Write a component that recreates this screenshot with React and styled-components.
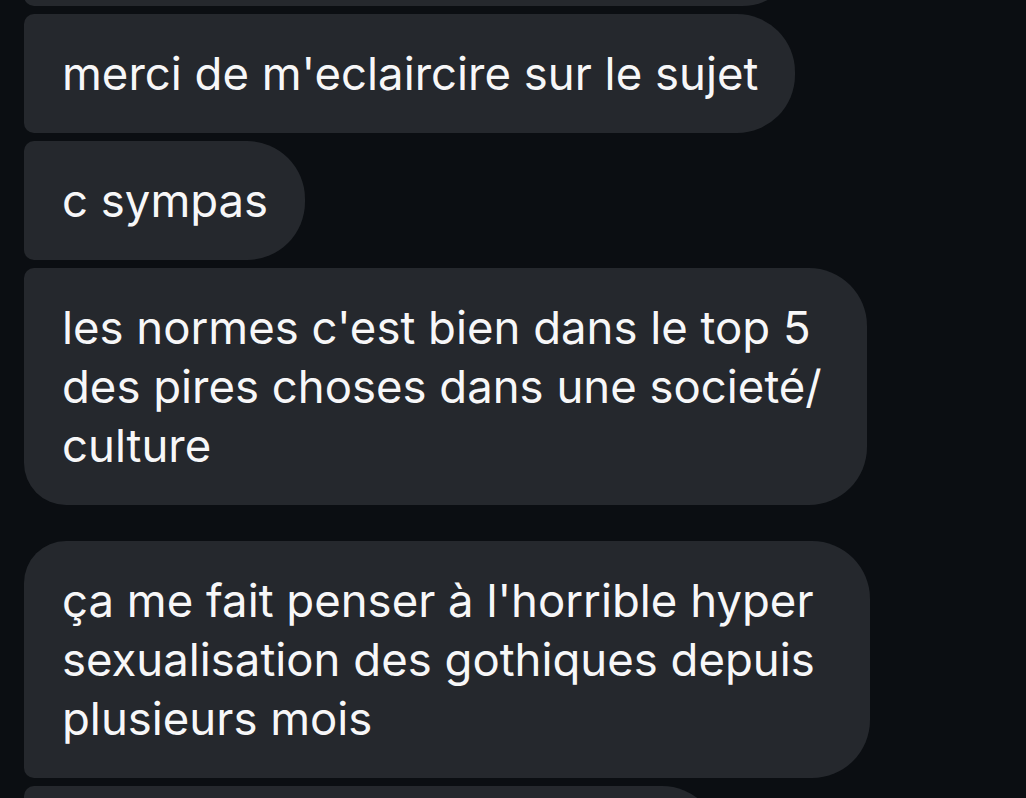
import React from 'react';
import styled, { createGlobalStyle } from 'styled-components';

const GlobalStyle = createGlobalStyle`
  html, body {
    margin: 0;
    padding: 0;
    background: #0b0e12;
    overflow: hidden;
  }
`;

const Screen = styled.div`
  width: 1026px;
  height: 798px;
  overflow: hidden;
  background: #0b0e12;
  font-family: Inter, "Noto Sans", sans-serif;
`;

const Thread = styled.div`
  display: flex;
  flex-direction: column;
  align-items: flex-start;
  gap: 8px;
  padding-left: 24px;
  margin-top: -113px;
`;

const Group = styled.div`
  display: flex;
  flex-direction: column;
  align-items: flex-start;
  gap: 8px;
  margin-top: ${(p) => (p.$spaced ? '28px' : '0')};
`;

const Bubble = styled.div`
  box-sizing: border-box;
  width: ${(p) => (p.$width ? `${p.$width}px` : 'auto')};
  height: ${(p) => (p.$height ? `${p.$height}px` : 'auto')};
  padding: 30px 37px 30px 38px;
  background: #25282d;
  color: #f7f7f8;
  font-size: 45.5px;
  line-height: 59px;
  border-radius: ${(p) => p.$tl || 10}px 58px 58px ${(p) => p.$bl || 10}px;
`;

const Line = styled.div`
  white-space: nowrap;
`;

const first = [
  { lines: [], width: 776, height: 119 },
  { lines: ["merci de m'eclaircire sur le sujet"] },
  { lines: ['c sympas'] },
  {
    lines: ["les normes c'est bien dans le top 5", 'des pires choses dans une societé/', 'culture'],
    width: 843,
    bl: 42,
  },
];

const second = [
  {
    lines: ["ça me fait penser à l'horrible hyper", 'sexualisation des gothiques depuis', 'plusieurs mois'],
    width: 846,
    tl: 42,
  },
  { lines: [], width: 696, height: 119 },
];

function Message({ lines, width, height, tl, bl }) {
  return (
    <Bubble $width={width} $height={height} $tl={tl} $bl={bl}>
      {lines.map((l, i) => (
        <Line key={i}>{l}</Line>
      ))}
    </Bubble>
  );
}

export default function App() {
  return (
    <Screen>
      <GlobalStyle />
      <Thread>
        <Group>
          {first.map((m, i) => (
            <Message key={i} {...m} />
          ))}
        </Group>
        <Group $spaced>
          {second.map((m, i) => (
            <Message key={i} {...m} />
          ))}
        </Group>
      </Thread>
    </Screen>
  );
}
